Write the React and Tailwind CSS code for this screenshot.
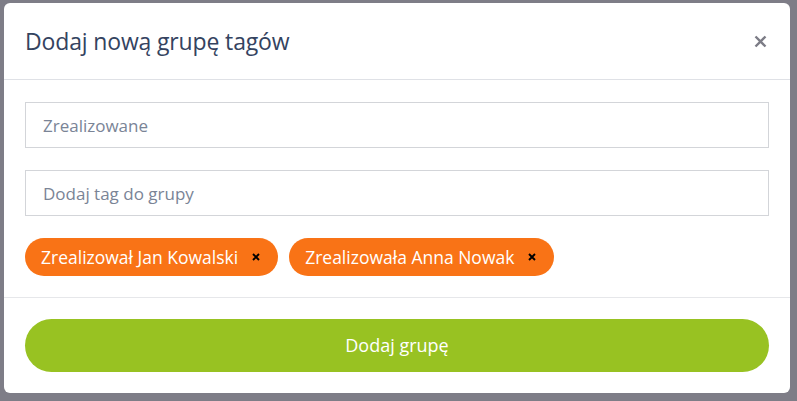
import React, { useState } from 'react';

export default function App() {
    const [name, setName] = useState('');
    const [tag, setTag] = useState('');
    const [tags, setTags] = useState(['Zrealizował Jan Kowalski', 'Zrealizowała Anna Nowak']);

    const removeTag = (t) => setTags(tags.filter(x => x !== t));

    return (
        <div className="w-[797px] h-[401px] bg-[#7e7d87] pt-[3px] pl-[4px] overflow-hidden" style={{ fontFamily: '"Open Sans", "Noto Sans", sans-serif' }}>
            <div className="w-[786px] h-[390px] bg-white rounded-md flex flex-col">
                <div className="h-[77px] flex items-center justify-between pl-[21px] pr-[18px] border-b border-[#dfe1e6]">
                    <h2 className="text-[23px] text-[#34435f] tracking-[-0.15px]">Dodaj nową grupę tagów</h2>
                    <button className="text-[#7c7c86] w-6 h-6 flex items-center justify-center">
                        <svg width="13" height="13" viewBox="0 0 13 13">
                            <path d="M1.5 1.5 L11.5 11.5 M11.5 1.5 L1.5 11.5" stroke="currentColor" strokeWidth="2.4" strokeLinecap="butt" />
                        </svg>
                    </button>
                </div>
                <div className="px-[21px] pt-[22px] pb-[21px] flex flex-col gap-[22px] border-b border-[#e6e7ea]">
                    <input
                        value={name}
                        onChange={e => setName(e.target.value)}
                        placeholder="Zrealizowane"
                        className="w-[744px] h-[46px] border border-[#d3d5d9] px-[17px] text-[17px] text-[#33425e] placeholder:text-[#7a8496] outline-none"
                    />
                    <input
                        value={tag}
                        onChange={e => setTag(e.target.value)}
                        placeholder="Dodaj tag do grupy"
                        className="w-[744px] h-[46px] border border-[#d3d5d9] px-[17px] text-[17px] text-[#33425e] placeholder:text-[#7a8496] outline-none"
                    />
                    <div className="flex gap-[11px]">
                        {tags.map(t => (
                            <span key={t} className="h-[38px] bg-[#f97316] rounded-full flex items-center pl-[16px] pr-[18px] text-white text-[17.5px]">
                                {t}
                                <button onClick={() => removeTag(t)} className="ml-[14px] text-black">
                                    <svg width="8" height="8" viewBox="0 0 8 8">
                                        <path d="M1 1 L7 7 M7 1 L1 7" stroke="currentColor" strokeWidth="1.9" />
                                    </svg>
                                </button>
                            </span>
                        ))}
                    </div>
                </div>
                <div className="px-[21px] pt-[21px]">
                    <button className="w-[744px] h-[53px] rounded-full bg-[#98c222] text-white text-[18px]">Dodaj grupę</button>
                </div>
            </div>
        </div>
    );
}
